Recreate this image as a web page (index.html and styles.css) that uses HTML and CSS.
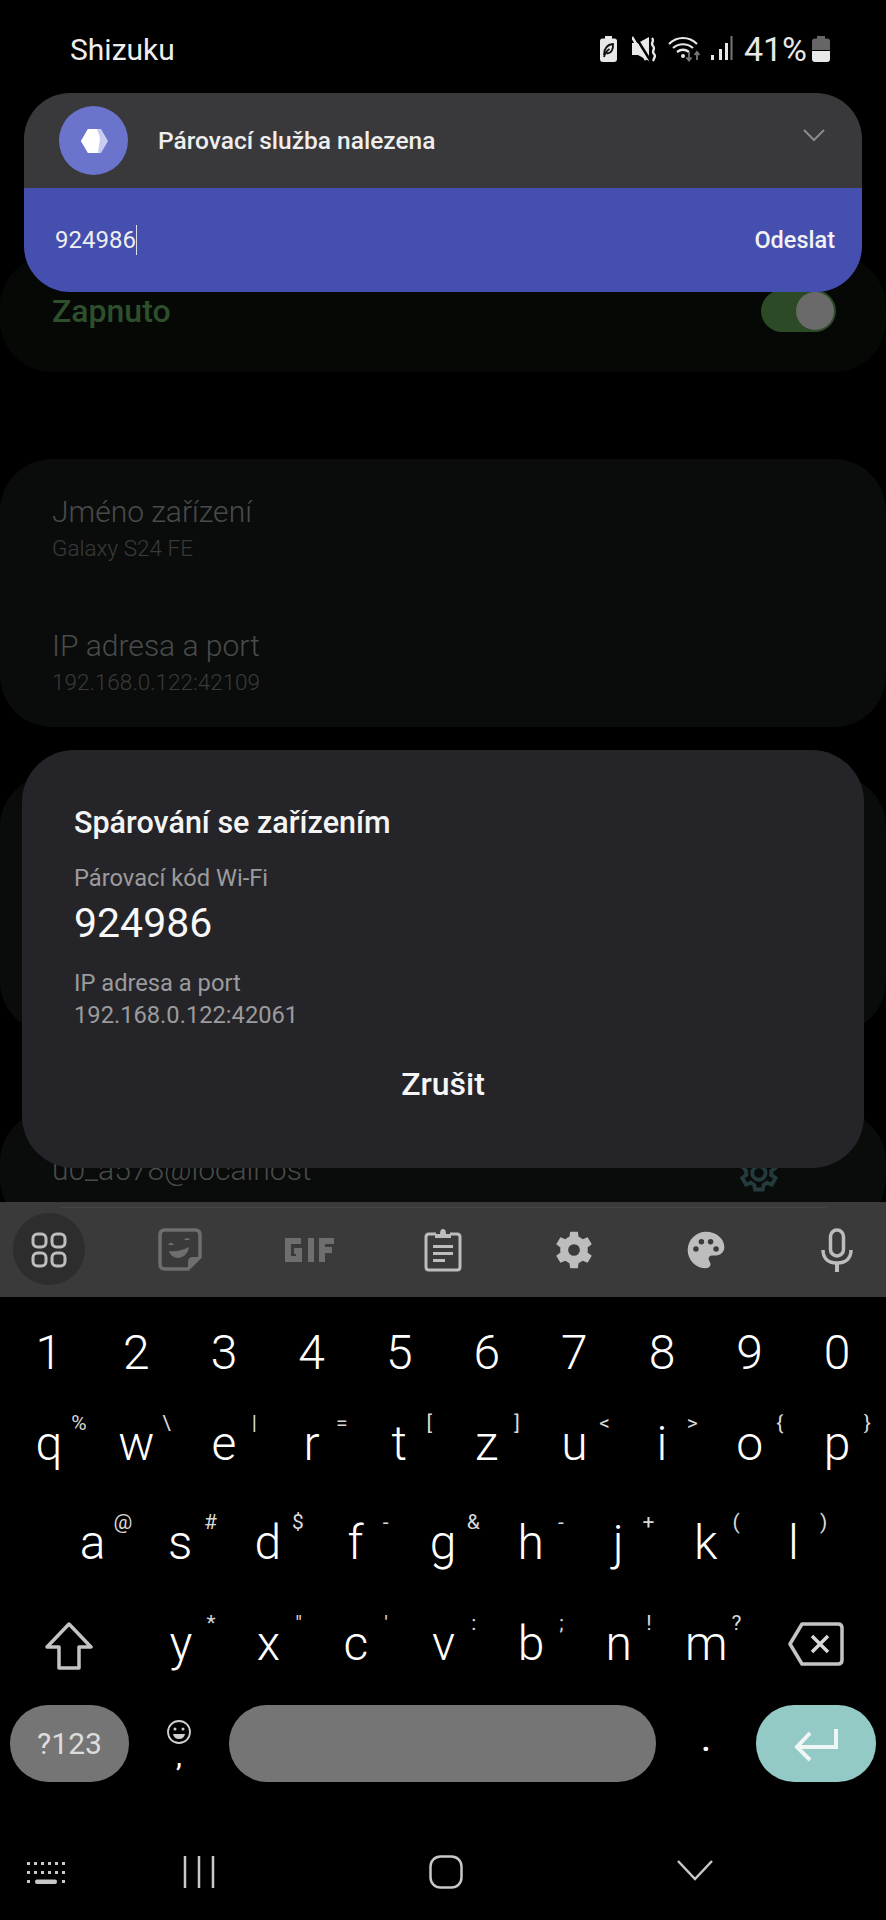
FILE: index.html
```html
<!DOCTYPE html>
<html>
<head>
<meta charset="utf-8">
<title>Shizuku</title>
<link rel="stylesheet" href="styles.css">
</head>
<body>
<div class="screen">
    <div class="status">
        <div class="status_app">Shizuku</div>
        <div class="status_icons">
            <svg class="ic_leaf" width="17" height="26" viewBox="0 0 17 26"><path d="M5 0h7v2.500h2.500q2.500 0 2.500 2.500v18q0 3-3 3H3q-3 0-3-3V5q0-2.500 2.500-2.500H5z" fill="#e8e8e8"/><path d="M4 19C4 12 8 8.500 13 8c.5 5-1.500 9.500-6.500 9.500M4 21c1-4 3-6.500 5.500-8" fill="none" stroke="#111" stroke-width="1.800"/></svg>
            <svg class="ic_mute" width="25" height="26" viewBox="0 0 25 26"><path d="M0 7h6l11-6v24L6 19H0z" fill="#e8e8e8"/><path d="M3 0l15 24" stroke="#000" stroke-width="2.500"/><path d="M0 1l14 23" stroke="#e8e8e8" stroke-width="2.500"/><path d="M20 2c3 3-2 5 1 8s-2 5 1 8-2 5 0 7" fill="none" stroke="#e8e8e8" stroke-width="2.400"/></svg>
            <svg class="ic_wifi" width="34" height="26" viewBox="0 0 34 26"><path d="M1 8c8-8 20-8 28 0M5 12c6-5 14-5 20 0M9 16c4-3 8-3 12 0" fill="none" stroke="#e8e8e8" stroke-width="2.200"/><circle cx="15" cy="20" r="2" fill="#e8e8e8"/><path d="M21 16v8M18.500 21.500l2.500 3 2.500-3M29 24v-7M26.500 19l2.500-3 2.500 3" fill="none" stroke="#777" stroke-width="1.800"/></svg>
            <svg class="ic_signal" width="23" height="25" viewBox="0 0 23 25"><path d="M1 19h3v5H1zM9 13h3v11H9zM15 7h3v17h-3z" fill="#e8e8e8"/><path d="M20.500 0h2v24h-2z" fill="#777"/></svg>
            <span class="status_pct">41%</span>
            <svg class="ic_batt" width="18" height="26" viewBox="0 0 18 26"><path d="M5 0h8v2.500h2q3 0 3 3V14H0V5.500q0-3 3-3h2z" fill="#666"/><path d="M0 15h18v8q0 3-3 3H3q-3 0-3-3z" fill="#e8e8e8"/></svg>
        </div>
    </div>

    <div class="cards">
        <div class="card card_switch">
            <div class="card_on">Zapnuto</div>
            <div class="toggle"><div class="toggle_thumb"></div></div>
        </div>
        <div class="card card_info">
            <div class="item">
                <div class="item_title">Jméno zařízení</div>
                <div class="item_sub">Galaxy S24 FE</div>
            </div>
            <div class="item">
                <div class="item_title">IP adresa a port</div>
                <div class="item_sub">192.168.0.122:42109</div>
            </div>
        </div>
        <div class="card card_blank"></div>
        <div class="card card_user">
            <div class="item_title">u0_a578@localhost</div>
            <svg class="user_gear" width="46" height="46" viewBox="0 0 24 24"><path d="M19.400 13c.1-.3.100-.7.100-1s0-.7-.1-1l2.100-1.600-2-3.500-2.500 1c-.5-.4-1.100-.7-1.700-1L15 2.500h-4L10.500 5c-.6.300-1.200.6-1.700 1l-2.500-1-2 3.500L6.400 11c-.1.300-.1.700-.1 1s0 .7.100 1l-2.100 1.600 2 3.500 2.500-1c.5.400 1.100.7 1.700 1l.5 2.500h4l.5-2.500c.6-.3 1.200-.6 1.700-1l2.500 1 2-3.500zM13 15.500a3.500 3.500 0 1 1 0-7 3.500 3.500 0 0 1 0 7z" fill="none" stroke="#243b3e" stroke-width="2"/></svg>
        </div>
    </div>

    <div class="notif">
        <div class="notif_top">
            <div class="notif_icon">
                <svg width="30" height="30" viewBox="0 0 30 30"><path d="M9 3h13l7 12-7 12H9L2 15z" fill="#c9cdf0"/><path d="M9 3h9l3 9-2 15H9L2 15z" fill="#fff"/></svg>
            </div>
            <div class="notif_title">Párovací služba nalezena</div>
            <svg class="notif_chev" width="24" height="14" viewBox="0 0 24 14"><path d="M2 2l10 10L22 2" fill="none" stroke="#8a8a8e" stroke-width="2"/></svg>
        </div>
        <div class="notif_reply">
            <div class="notif_input">924986</div>
            <div class="notif_send">Odeslat</div>
        </div>
    </div>

    <div class="dialog">
        <div class="dialog_title">Spárování se zařízením</div>
        <div class="dialog_label">Párovací kód Wi-Fi</div>
        <div class="dialog_code">924986</div>
        <div class="dialog_label dialog_ip">IP adresa a port</div>
        <div class="dialog_label dialog_addr">192.168.0.122:42061</div>
        <div class="dialog_btn">Zrušit</div>
    </div>

    <div class="toolbar">
        <div class="tool tool_active">
            <svg width="36" height="36" viewBox="0 0 36 36"><g fill="none" stroke="#bdbdbd" stroke-width="3"><rect x="2" y="2" width="13" height="13" rx="4.500"/><rect x="21" y="2" width="13" height="13" rx="4.500"/><rect x="2" y="21" width="13" height="13" rx="4.500"/><rect x="21" y="21" width="13" height="13" rx="4.500"/></g></svg>
        </div>
        <div class="tool">
            <svg width="44" height="44" viewBox="0 0 44 44"><path d="M30 41H7q-5 0-5-5V7q0-5 5-5h30q5 0 5 5v22z" fill="none" stroke="#6e6e6e" stroke-width="3.500"/><path d="M30 41v-7q0-5 5-5h7z" fill="#6e6e6e"/><path d="M10 17q3-5 6 0zM26 12q3-4 6 0zM11 23c7 1 14-1 20-4-1 7-6 11-11 11-4 0-8-3-9-7z" fill="#6e6e6e"/></svg>
        </div>
        <div class="tool">
            <svg width="52" height="24" viewBox="0 0 52 24"><g fill="none" stroke="#6e6e6e" stroke-width="6"><path d="M16 3H3v18h11v-8H9"/><path d="M26 0v24"/><path d="M49 3H37v21M37 12h10"/></g></svg>
        </div>
        <div class="tool">
            <svg width="38" height="44" viewBox="0 0 38 44"><path d="M12 6H5q-3 0-3 3v30q0 3 3 3h28q3 0 3-3V9q0-3-3-3h-7" fill="none" stroke="#bdbdbd" stroke-width="3"/><path d="M11 10V6h5q0-5 3-5t3 5h5v4z" fill="#bdbdbd"/><path d="M9 17h20v3H9zM9 24h20v3H9zM9 31h12v3H9z" fill="#bdbdbd"/></svg>
        </div>
        <div class="tool">
            <svg width="44" height="44" viewBox="0 0 24 24"><path d="M19.400 13.300c.1-.4.100-.9.100-1.300s0-.9-.1-1.300l2.300-1.800-2.300-3.900-2.700 1.100c-.7-.5-1.400-.9-2.200-1.300L14.100 2H9.900l-.4 2.800c-.8.300-1.500.8-2.200 1.300L4.600 5 2.300 8.900l2.300 1.800c-.1.400-.1.900-.1 1.300s0 .9.100 1.300l-2.300 1.800L4.600 19l2.700-1.100c.7.500 1.400.9 2.200 1.300L9.900 22h4.200l.4-2.800c.8-.3 1.500-.8 2.200-1.300l2.700 1.100 2.300-3.900zM12 15.200a3.200 3.200 0 1 1 0-6.400 3.200 3.200 0 0 1 0 6.400z" fill="#bdbdbd"/></svg>
        </div>
        <div class="tool">
            <svg width="44" height="44" viewBox="0 0 24 24"><path d="M12 2C6.500 2 2 6.500 2 12s4.500 10 10 10c1.700 0 2.500-1.100 2.500-2.300 0-.6-.3-1.100-.6-1.600-.3-.4-.5-.9-.5-1.300 0-1 .8-1.800 1.800-1.800h2.300c2.500 0 4.500-2 4.500-4.500C22 5.600 17.500 2 12 2zM6.500 13a1.500 1.500 0 1 1 0-3 1.500 1.500 0 0 1 0 3zm3-4a1.500 1.500 0 1 1 0-3 1.500 1.500 0 0 1 0 3zm5 0a1.500 1.500 0 1 1 0-3 1.500 1.500 0 0 1 0 3zm3 4a1.500 1.500 0 1 1 0-3 1.500 1.500 0 0 1 0 3z" fill="#bdbdbd"/></svg>
        </div>
        <div class="tool">
            <svg width="34" height="44" viewBox="0 0 34 44"><rect x="10.500" y="2" width="13" height="26" rx="6.500" fill="none" stroke="#bdbdbd" stroke-width="3.500"/><path d="M3 22c0 9 6 13 14 13s14-4 14-13" fill="none" stroke="#bdbdbd" stroke-width="3.500"/><path d="M15 34h4v10h-4z" fill="#bdbdbd"/></svg>
        </div>
    </div>

    <div class="keyboard">
        <div class="row row_num">
            <div class="key">1</div><div class="key">2</div><div class="key">3</div><div class="key">4</div><div class="key">5</div>
            <div class="key">6</div><div class="key">7</div><div class="key">8</div><div class="key">9</div><div class="key">0</div>
        </div>
        <div class="row row_q">
            <div class="key">q<span class="hint">%</span></div>
            <div class="key">w<span class="hint">\</span></div>
            <div class="key">e<span class="hint">|</span></div>
            <div class="key">r<span class="hint">=</span></div>
            <div class="key">t<span class="hint">[</span></div>
            <div class="key">z<span class="hint">]</span></div>
            <div class="key">u<span class="hint">&lt;</span></div>
            <div class="key">i<span class="hint">&gt;</span></div>
            <div class="key">o<span class="hint">{</span></div>
            <div class="key">p<span class="hint">}</span></div>
        </div>
        <div class="row row_a">
            <div class="key">a<span class="hint">@</span></div>
            <div class="key">s<span class="hint">#</span></div>
            <div class="key">d<span class="hint">$</span></div>
            <div class="key">f<span class="hint">-</span></div>
            <div class="key">g<span class="hint">&amp;</span></div>
            <div class="key">h<span class="hint">-</span></div>
            <div class="key">j<span class="hint">+</span></div>
            <div class="key">k<span class="hint">(</span></div>
            <div class="key">l<span class="hint">)</span></div>
        </div>
        <div class="row row_y">
            <div class="key key_wide key_shift">
                <svg width="50" height="48" viewBox="0 0 50 48"><path d="M25 2L47 25H35v21H15V25H3z" fill="none" stroke="#c4c4c4" stroke-width="3.500" stroke-linejoin="round"/></svg>
            </div>
            <div class="key">y<span class="hint">*</span></div>
            <div class="key">x<span class="hint">"</span></div>
            <div class="key">c<span class="hint">'</span></div>
            <div class="key">v<span class="hint">:</span></div>
            <div class="key">b<span class="hint">;</span></div>
            <div class="key">n<span class="hint">!</span></div>
            <div class="key">m<span class="hint">?</span></div>
            <div class="key key_wide key_back">
                <svg width="56" height="44" viewBox="0 0 56 44"><path d="M14 2h36q4 0 4 4v32q0 4-4 4H14L2 22z" fill="none" stroke="#c4c4c4" stroke-width="3.500" stroke-linejoin="round"/><path d="M24 14l16 16M40 14L24 30" stroke="#d8d8d8" stroke-width="3.500"/></svg>
            </div>
        </div>
        <div class="row row_bottom">
            <div class="pill pill_sym">?123</div>
            <div class="emoji_key">
                <svg width="24" height="36" viewBox="0 0 24 36"><circle cx="12" cy="13" r="11" fill="none" stroke="#d0d0d0" stroke-width="1.800"/><circle cx="8" cy="10" r="1.500" fill="#d0d0d0"/><circle cx="16" cy="10" r="1.500" fill="#d0d0d0"/><path d="M6 15h12q-1 5-6 5t-6-5z" fill="#d0d0d0"/></svg>
                <span class="emoji_comma">,</span>
            </div>
            <div class="pill pill_space"></div>
            <div class="dot_key">.</div>
            <div class="pill pill_enter">
                <svg width="46" height="36" viewBox="0 0 46 36"><path d="M43 3v18H5M17 7L4 21l13 13" fill="none" stroke="#f0f6f5" stroke-width="4"/></svg>
            </div>
        </div>
    </div>

    <div class="nav">
        <svg class="nav_kb" width="40" height="24" viewBox="0 0 40 24"><g fill="#c8c8c8"><path d="M1 1h3v3H1zM8 1h3v3H8zM15 1h3v3h-3zM22 1h3v3h-3zM29 1h3v3h-3zM36 1h3v3h-3zM1 10h3v3H1zM8 10h3v3H8zM15 10h3v3h-3zM22 10h3v3h-3zM29 10h3v3h-3zM36 10h3v3h-3zM1 19h3v3H1zM36 19h3v3h-3z"/><rect x="9" y="18.500" width="22" height="4.500" rx="2"/></g></svg>
        <svg class="nav_recent" width="32" height="32" viewBox="0 0 32 32"><path d="M2 0v32M16 0v32M30 0v32" stroke="#c8c8c8" stroke-width="2.500"/></svg>
        <svg class="nav_home" width="34" height="34" viewBox="0 0 34 34"><rect x="1.500" y="1.500" width="31" height="31" rx="10" fill="none" stroke="#c8c8c8" stroke-width="2.500"/></svg>
        <svg class="nav_back" width="36" height="22" viewBox="0 0 36 22"><path d="M1 2l17 18L35 2" fill="none" stroke="#c8c8c8" stroke-width="2.500"/></svg>
    </div>
</div>
</body>
</html>
```

FILE: styles.css
```css
* {
    box-sizing: border-box;
}
body {
    margin: 0;
    background-color: #000;
    font-family: Roboto, "Liberation Sans", sans-serif;
    color: #fff;
}
.screen {
    position: relative;
    width: 886px;
    height: 1920px;
    display: flex;
    flex-direction: column;
    overflow: hidden;
}

/* status bar */
.status {
    height: 93px;
    flex: none;
    display: flex;
    justify-content: space-between;
    padding: 32px 56px 0 70px;
}
.status_app {
    font-size: 30px;
    line-height: 36px;
    color: #eee;
}
.status_icons {
    display: flex;
    align-items: flex-start;
    padding-top: 4px;
}
.ic_mute { margin-left: 15px; }
.ic_wifi { margin-left: 11px; }
.ic_signal { margin-left: 8px; }
.ic_batt { margin-left: 5px; }
.status_pct {
    margin-left: 11px;
    font-size: 34px;
    line-height: 26px;
    color: #e8e8e8;
}

/* dimmed settings page behind */
.cards {
    height: 1109px;
    flex: none;
    padding-top: 162px;
    overflow: hidden;
}
.card {
    background-color: #0a0c0b;
    border-radius: 52px;
}
.card_switch {
    height: 117px;
    margin-bottom: 87px;
    padding: 38px 50px 0 52px;
    display: flex;
    justify-content: space-between;
    align-items: flex-start;
    background-color: #060806;
}
.card_on {
    font-size: 32px;
    line-height: 36px;
    font-weight: 500;
    color: #2e4f2b;
}
.toggle {
    width: 75px;
    height: 42px;
    margin-top: -3px;
    border-radius: 21px;
    background-color: #2b4a25;
    display: flex;
    justify-content: flex-end;
    align-items: center;
    padding-right: 2px;
}
.toggle_thumb {
    width: 38px;
    height: 38px;
    border-radius: 50%;
    background-color: #6a6a6a;
}
.card_info {
    height: 268px;
    margin-bottom: 48px;
    padding: 35px 52px 0;
}
.item {
    height: 134px;
}
.item_title {
    font-size: 30px;
    line-height: 36px;
    font-weight: 300;
    color: #484b4a;
}
.item_sub {
    margin-top: 1px;
    font-size: 22.500px;
    line-height: 34px;
    font-weight: 300;
    color: #383b3a;
}
.card_blank {
    height: 258px;
    margin-bottom: 77px;
}
.card_user {
    height: 120px;
    padding: 42px 50px 0 52px;
    display: flex;
    justify-content: space-between;
    align-items: flex-start;
}
.user_gear {
    margin-right: 56px;
    margin-top: -2px;
}

/* heads-up notification */
.notif {
    position: absolute;
    left: 24px;
    top: 93px;
    width: 838px;
    border-radius: 46px;
    overflow: hidden;
}
.notif_top {
    height: 95px;
    background-color: #39393c;
    display: flex;
    align-items: center;
    padding-left: 35px;
    position: relative;
}
.notif_icon {
    width: 69px;
    height: 69px;
    border-radius: 50%;
    background-color: #6b74cc;
    display: flex;
    justify-content: center;
    align-items: center;
}
.notif_title {
    margin-left: 30px;
    font-size: 24.500px;
    font-weight: 500;
    color: #eee;
}
.notif_chev {
    position: absolute;
    right: 36px;
    top: 35px;
}
.notif_reply {
    height: 104px;
    background-color: #454fb0;
    display: flex;
    justify-content: space-between;
    align-items: center;
    padding: 0 27px 0 31px;
}
.notif_input {
    font-size: 24px;
    color: #eee;
    border-right: 1px solid #dde;
    line-height: 30px;
}
.notif_send {
    font-size: 23.500px;
    font-weight: 500;
    color: #f2f2f2;
}

/* pairing dialog */
.dialog {
    position: absolute;
    left: 22px;
    top: 750px;
    width: 842px;
    height: 418px;
    border-radius: 52px;
    background-color: #252529;
    padding: 55px 52px 0;
}
.dialog_title {
    font-size: 30.500px;
    line-height: 36px;
    font-weight: 500;
    color: #f4f4f4;
}
.dialog_label {
    font-size: 23.700px;
    line-height: 30px;
    color: #9b9b9d;
}
.dialog_title + .dialog_label {
    margin-top: 22px;
}
.dialog_code {
    margin-top: 7px;
    font-size: 41px;
    line-height: 46px;
    color: #f8f8f8;
}
.dialog_ip {
    margin-top: 22px;
}
.dialog_addr {
    margin-top: 2px;
}
.dialog_btn {
    margin-top: 36px;
    margin-left: -52px;
    margin-right: -52px;
    text-align: center;
    font-size: 32px;
    line-height: 36px;
    font-weight: 500;
    color: #f6f6f6;
}

/* keyboard */
.toolbar {
    height: 95px;
    flex: none;
    background-color: #3a3a3a;
    display: grid;
    grid-template-columns: repeat(7, 131.400px);
    margin-left: -17px;
    position: relative;
}
.toolbar::after {
    content: "";
    position: absolute;
    left: 77px;
    right: 60px;
    top: 5px;
    height: 1px;
    background-color: #464646;
}
.tool {
    display: flex;
    justify-content: center;
    align-items: center;
    height: 95px;
}
.tool_active {
    position: relative;
}
.tool_active::before {
    content: "";
    position: absolute;
    left: 30px;
    top: 11px;
    width: 72px;
    height: 72px;
    border-radius: 50%;
    background-color: #2d2d2d;
}
.tool_active svg {
    position: relative;
}
.keyboard {
    flex: none;
    padding: 0 5px;
}
.row {
    display: flex;
    justify-content: center;
    height: 100px;
}
.row_num {
    height: 100px;
    padding-top: 28px;
}
.row_q {
    height: 98px;
    padding-top: 19px;
}
.row_a {
    padding-top: 20px;
}
.row_y {
    padding-top: 21px;
    padding-left: 5px;
    justify-content: flex-start;
}
.key {
    position: relative;
    width: 87.600px;
    text-align: center;
    font-size: 48px;
    line-height: 56px;
    font-weight: 300;
    color: #fff;
}
.key_wide {
    width: 118px;
    display: flex;
    justify-content: center;
    align-items: flex-start;
    padding-top: 6px;
}
.key_shift {
    margin-right: 9px;
}
.key_back {
    padding-left: 14px;
}
.hint {
    position: absolute;
    left: 64px;
    top: -5px;
    width: 20px;
    text-align: center;
    font-size: 21px;
    line-height: 24px;
    font-weight: 400;
    color: #d8d8d8;
}
.row_bottom {
    height: 77px;
    margin: 10px -5px 0;
    padding: 0 10px;
    justify-content: flex-start;
    align-items: stretch;
}
.pill {
    border-radius: 38px;
    background-color: #757575;
    display: flex;
    justify-content: center;
    align-items: center;
}
.pill_sym {
    width: 119px;
    font-size: 30px;
    color: #ddd;
}
.emoji_key {
    width: 100px;
    display: flex;
    flex-direction: column;
    align-items: center;
    padding-top: 14px;
}
.emoji_comma {
    font-size: 30px;
    line-height: 14px;
    margin-top: -6px;
}
.pill_space {
    width: 427px;
}
.dot_key {
    width: 100px;
    text-align: center;
    font-size: 34px;
    line-height: 68px;
    font-weight: 500;
}
.pill_enter {
    width: 120px;
    background-color: #93cac6;
}

/* nav bar */
.nav {
    position: relative;
    flex: 1;
}
.nav_kb,
.nav_recent,
.nav_home,
.nav_back {
    position: absolute;
}
.nav_kb { left: 26px; top: 79px; }
.nav_recent { left: 183px; top: 74px; }
.nav_home { left: 429px; top: 73px; }
.nav_back { left: 677px; top: 77px; }
```
